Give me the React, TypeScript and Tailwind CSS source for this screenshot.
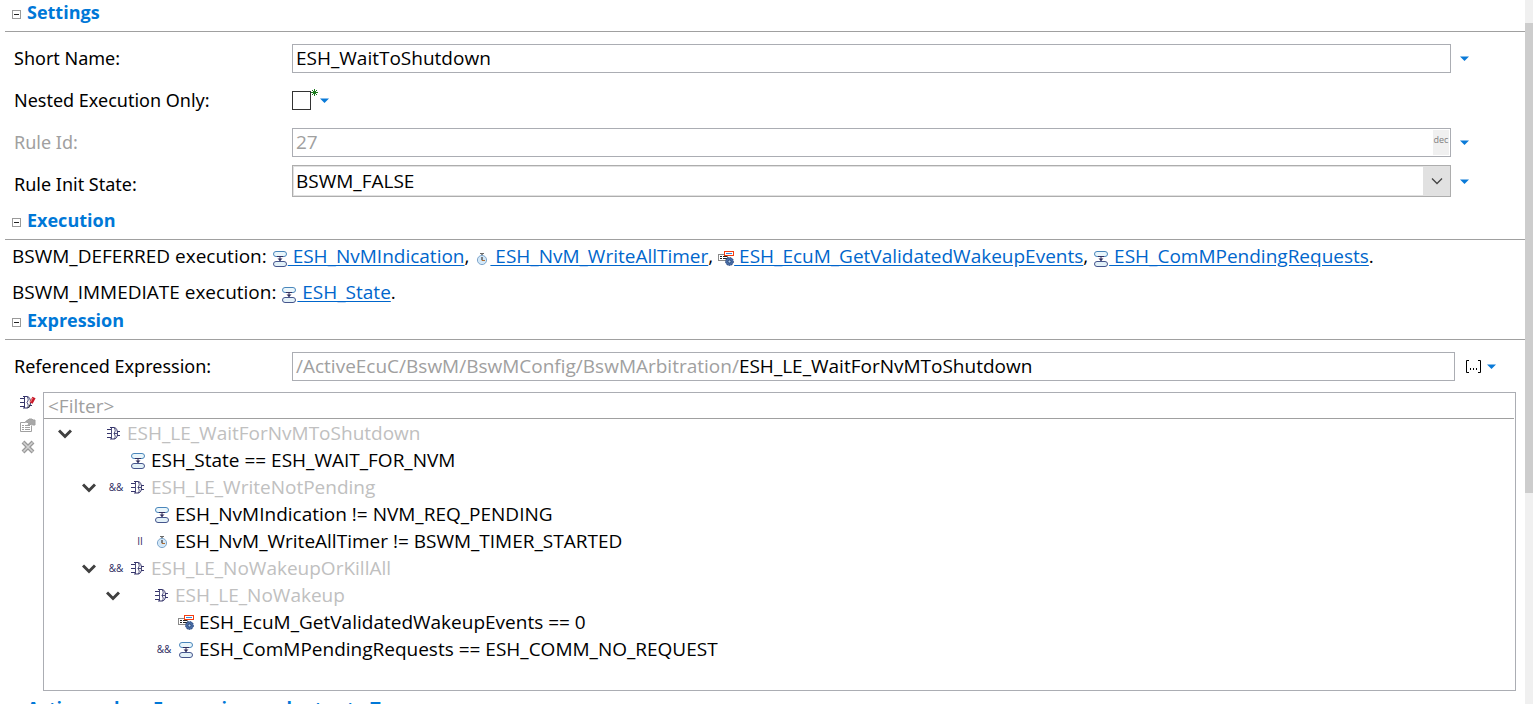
import { useState } from "react";
import type { ReactNode } from "react";

type IconKind = "signal" | "timer" | "callout" | "logic";

function SignalIcon() {
  return (
    <svg width="16" height="16" viewBox="0 0 16 16" fill="none" aria-hidden="true">
      <rect x="1.5" y="0.5" width="13" height="5" rx="2.5" fill="#eaf6fb" stroke="#4a86bb" />
      <rect x="1.5" y="10.5" width="13" height="5" rx="2.5" fill="#e3f1f8" stroke="#45558c" />
      <path d="M5 5.5h6M8 6v4" stroke="#33305f" />
      <path d="M5.5 7.5h5L8 10z" fill="#33305f" />
    </svg>
  );
}

function TimerIcon() {
  return (
    <svg width="16" height="16" viewBox="0 0 16 16" fill="none" aria-hidden="true">
      <path d="M6 2.5h4" stroke="#6b6b6b" />
      <path d="M8 3v2" stroke="#8a8a8a" strokeWidth="2" />
      <circle cx="8" cy="9" r="4.6" fill="#d3e8f8" stroke="#7fa6cc" />
      <path d="M8 6v3.5h3" stroke="#b06a2c" />
      <path d="M8 6v3" stroke="#35506f" />
    </svg>
  );
}

function CalloutIcon() {
  return (
    <svg width="16" height="16" viewBox="0 0 16 16" fill="none" aria-hidden="true">
      <rect x="0.5" y="3.5" width="9" height="6" fill="#fff" stroke="#8a8a8a" />
      <path d="M2 5.500h2M5 5.500h4M2 7.500h2M5 7.500h4" stroke="#222" />
      <rect x="6.5" y="0.500" width="9" height="4" fill="#fff" stroke="#f43c10" />
      <path d="M8 2.500h6" stroke="#3c86d8" />
      <circle cx="11.5" cy="10.500" r="3.9" fill="#4a6ea8" stroke="#2b4678" strokeDasharray="1.6 1" />
      <circle cx="11.5" cy="10.500" r="1.500" fill="#a9cbed" stroke="#223a68" strokeWidth="0.800" />
    </svg>
  );
}

function LogicIcon() {
  return (
    <svg width="16" height="16" viewBox="0 0 16 16" fill="none" stroke="#36356b" aria-hidden="true">
      <path d="M1 3.500h4M1 7.500h4M1 11.500h4M11 5.500h3M11 9.500h3" />
      <path d="M4 1.500h4.500c2 .500 3 3 3 6s-1 5-3 5.500H4" />
      <path d="M5.500 1.500v11.500M8 1.500c1.600 2 1.600 4 0 6c1.600 2 1.600 4 0 5.500M8 7.500h3.500" strokeWidth="0.900" />
    </svg>
  );
}

function Icon({ kind }: { kind: IconKind }) {
  if (kind === "signal") return <SignalIcon />;
  if (kind === "timer") return <TimerIcon />;
  if (kind === "callout") return <CalloutIcon />;
  return <LogicIcon />;
}

function MenuArrow({ label }: { label: string }) {
  return (
    <button type="button" aria-label={label} className="flex h-4 w-[9px] shrink-0 items-center">
      <svg width="9" height="5" viewBox="0 0 9 5" aria-hidden="true">
        <path d="M0 0.500h9L4.500 5z" fill="#0a7ad8" />
      </svg>
    </button>
  );
}

function SectionHeading({ children }: { children: ReactNode }) {
  return (
    <h2 className="ml-[5px] flex h-8 items-start border-b border-[#a0a0a0] pl-[7px] text-[18px] font-bold leading-6 text-[#0078d7]">
      <button type="button" className="flex items-center gap-[6px]">
        <svg width="9" height="9" viewBox="0 0 9 9" fill="none" className="mt-1" aria-hidden="true">
          <rect x="0.5" y="0.5" width="8" height="8" stroke="#9a9a9a" />
          <path d="M2 4.500h5" stroke="#222" />
        </svg>
        {children}
      </button>
    </h2>
  );
}

function FieldLabel({ htmlFor, className, children }: { htmlFor: string; className?: string; children: ReactNode }) {
  return (
    <label htmlFor={htmlFor} className={`w-[278px] shrink-0 font-['Noto_Sans',sans-serif] text-[18px] ${className ?? ""}`}>
      {children}
    </label>
  );
}

function Reference({ kind, name }: { kind: IconKind; name: string }) {
  return (
    <>
      <span className="inline-block h-4 align-[-4px]">
        <Icon kind={kind} />
      </span>
      <a href="#" className="whitespace-pre text-[#0066cc] underline underline-offset-2">
        {" " + name}
      </a>
    </>
  );
}

type TreeNode = { level: 0 | 1 | 2 | 3; kind: IconKind; text: string; op?: string };

const nodes: TreeNode[] = [
  { level: 0, kind: "logic", text: "ESH_LE_WaitForNvMToShutdown" },
  { level: 1, kind: "signal", text: "ESH_State == ESH_WAIT_FOR_NVM" },
  { level: 1, kind: "logic", text: "ESH_LE_WriteNotPending", op: "&&" },
  { level: 2, kind: "signal", text: "ESH_NvMIndication != NVM_REQ_PENDING" },
  { level: 2, kind: "timer", text: "ESH_NvM_WriteAllTimer != BSWM_TIMER_STARTED", op: "II" },
  { level: 1, kind: "logic", text: "ESH_LE_NoWakeupOrKillAll", op: "&&" },
  { level: 2, kind: "logic", text: "ESH_LE_NoWakeup" },
  { level: 3, kind: "callout", text: "ESH_EcuM_GetValidatedWakeupEvents == 0" },
  { level: 3, kind: "signal", text: "ESH_ComMPendingRequests == ESH_COMM_NO_REQUEST", op: "&&" },
];

const indents = ["pl-[14px]", "pl-[38px]", "pl-[62px]", "pl-[86px]"];

function TreeRow({ node }: { node: TreeNode }) {
  const group = node.kind === "logic";
  return (
    <li className={`flex h-[27px] items-center whitespace-nowrap ${indents[node.level]}`}>
      <span className="mr-3 flex w-[14px] shrink-0">
        {group && (
          <button type="button" aria-label={"Collapse " + node.text}>
            <svg width="14" height="10" viewBox="0 0 14 10" fill="none" aria-hidden="true">
              <path d="M1 1.500l6 6 6-6" stroke="#404040" strokeWidth="3" />
            </svg>
          </button>
        )}
      </span>
      <span className="mr-[6px] w-4 shrink-0 text-center text-[10px] text-[#2c2b60]">{node.op}</span>
      <span className="mr-[5px] shrink-0">
        <Icon kind={node.kind} />
      </span>
      <span className={group ? "text-[#c0c0c0]" : "text-black"}>{node.text}</span>
    </li>
  );
}

export default function App() {
  const [shortName, setShortName] = useState("ESH_WaitToShutdown");
  const [nested, setNested] = useState(false);
  const [expression, setExpression] = useState("ESH_LE_WaitForNvMToShutdown");
  const [filter, setFilter] = useState("");

  return (
    <div className="flex h-screen overflow-hidden bg-white font-['Open_Sans','Noto_Sans',sans-serif] text-[19px] text-black">
      <main className="min-w-0 flex-1">
        <SectionHeading>Settings</SectionHeading>
        <div className="flex flex-col pb-[11px] pl-[14px] pr-[56px] pt-3">
          <div className="flex h-[29px] items-center">
            <FieldLabel htmlFor="short-name">Short Name:</FieldLabel>
            <input
              id="short-name"
              value={shortName}
              onChange={(e) => setShortName(e.target.value)}
              className="mr-[9px] h-[29px] min-w-0 flex-1 border border-[#abadb3] px-[3px] pb-px outline-none"
            />
            <MenuArrow label="Short Name options" />
          </div>
          <div className="mt-[13px] flex h-[29px] items-center">
            <FieldLabel htmlFor="nested">Nested Execution Only:</FieldLabel>
            <input
              id="nested"
              type="checkbox"
              checked={nested}
              onChange={(e) => setNested(e.target.checked)}
              className="h-[19px] w-[19px] appearance-none border border-[#333] bg-white checked:bg-[#0078d7]"
            />
            <svg width="7" height="7" viewBox="0 0 7 7" fill="none" stroke="#1c7a1c" className="mb-4 mr-[2px]" aria-hidden="true">
              <path d="M3.500 0v7M0 3.500h7M1 1l5 5M6 1L1 6" />
            </svg>
            <MenuArrow label="Nested Execution options" />
          </div>
          <div className="mt-[13px] flex h-[29px] items-center">
            <FieldLabel htmlFor="rule-id" className="text-[#a0a0a0]">Rule Id:</FieldLabel>
            <div className="mr-[9px] flex h-[29px] min-w-0 flex-1 border border-[#abadb3] p-px">
              <input id="rule-id" readOnly value="27" className="min-w-0 flex-1 px-[2px] text-[#a0a0a0] outline-none" />
              <span className="w-4 bg-[#f0f0f0] text-center text-[9px] leading-5 text-[#808080]">dec</span>
            </div>
            <MenuArrow label="Rule Id options" />
          </div>
          <div className="mt-2 flex h-8 items-center">
            <FieldLabel htmlFor="init-state" className="pt-[6px]">Rule Init State:</FieldLabel>
            <div className="relative mr-[9px] flex h-8 min-w-0 flex-1 border border-[#adadad] bg-[#e1e1e1] p-px">
              <select
                id="init-state"
                defaultValue="BSWM_FALSE"
                className="w-full appearance-none bg-[linear-gradient(to_left,#e1e1e1_26px,#ffffff_26px)] px-[2px] outline-none"
              >
                <option>BSWM_FALSE</option>
                <option>BSWM_TRUE</option>
              </select>
              <svg width="12" height="7" viewBox="0 0 12 7" fill="none" className="pointer-events-none absolute right-[7px] top-3" aria-hidden="true">
                <path d="M1 0.500l5 5 5-5" stroke="#444" strokeWidth="1.300" />
              </svg>
            </div>
            <MenuArrow label="Rule Init State options" />
          </div>
        </div>

        <SectionHeading>Execution</SectionHeading>
        <div className="flex flex-col gap-1 pl-3">
          <p className="flex h-8 items-center">
            <span className="whitespace-nowrap">
              BSWM_DEFERRED execution: <Reference kind="signal" name="ESH_NvMIndication" />,{" "}
              <Reference kind="timer" name="ESH_NvM_WriteAllTimer" />,{" "}
              <Reference kind="callout" name="ESH_EcuM_GetValidatedWakeupEvents" />,{" "}
              <Reference kind="signal" name="ESH_ComMPendingRequests" />.
            </span>
          </p>
          <p className="flex h-8 items-center">
            <span className="whitespace-nowrap">
              BSWM_IMMEDIATE execution: <Reference kind="signal" name="ESH_State" />.
            </span>
          </p>
        </div>

        <SectionHeading>Expression</SectionHeading>
        <div className="flex h-[52px] items-center pl-[14px] pr-[29px]">
          <FieldLabel htmlFor="expression">Referenced Expression:</FieldLabel>
          <div className="mr-[11px] flex h-[29px] min-w-0 flex-1 items-center border border-[#abadb3] px-[3px]">
            <span className="text-[#a0a0a0]">/ActiveEcuC/BswM/BswMConfig/BswMArbitration/</span>
            <input
              id="expression"
              value={expression}
              onChange={(e) => setExpression(e.target.value)}
              className="min-w-0 flex-1 outline-none"
            />
          </div>
          <button type="button" aria-label="Browse" className="mr-[6px]">
            <svg width="15" height="13" viewBox="0 0 15 13" fill="none" stroke="#000" aria-hidden="true">
              <path d="M3 0.500H0.500v12H3M12 0.500h2.500v12H12" />
              <path d="M4 9h1M7 9h1M10 9h1" strokeWidth="2" />
            </svg>
          </button>
          <MenuArrow label="Expression options" />
        </div>

        <div className="flex pl-5 pr-[9px]">
          <div className="flex w-[23px] shrink-0 flex-col gap-[6px] pt-[3px]">
            <button type="button" aria-label="Edit expression">
              <svg width="16" height="16" viewBox="0 0 16 16" fill="none" stroke="#36356b" aria-hidden="true">
                <path d="M0 3.500h4M0 7.500h4M0 11.500h4M10 10.500h2" />
                <path d="M3 1.500h4.500c2 .500 3 3 3 6s-1 5-3 5.500H3M4.500 1.500v11.500" />
                <path d="M7 1.500c1.600 2 1.600 4 0 6c1.600 2 1.600 4 0 5.500" strokeWidth="0.900" />
                <path d="M14 2.500l-3 5.500" stroke="#c81828" strokeWidth="3.600" />
                <path d="M12.500 3l-2 4" stroke="#f58a8a" />
                <path d="M10 9.500l-1.500 3.500" stroke="#333" />
              </svg>
            </button>
            <button type="button" aria-label="Properties">
              <svg width="16" height="16" viewBox="0 0 16 16" fill="none" stroke="#a0a0a0" aria-hidden="true">
                <path d="M0.500 5.500h5v-1l3-2M0.500 5.500v9h11v-6" />
                <path d="M2 8.500h2M5 8.500h5M2 10.500h2M5 10.500h5M2 12.500h2M5 12.500h5" />
                <path d="M6 5l3-3h3l1 1h2v5h-2l-2-1-2 2-1-1 1-2z" fill="#a8a8a8" />
              </svg>
            </button>
            <button type="button" aria-label="Delete">
              <svg width="16" height="16" viewBox="0 0 16 16" fill="none" aria-hidden="true">
                <path d="M3 3l10 10M13 3L3 13" stroke="#999" strokeWidth="4" />
                <path d="M3.500 3.500l9 9M12.500 3.500l-9 9" stroke="#d4d4d4" strokeWidth="1.500" />
              </svg>
            </button>
          </div>
          <div className="min-w-0 flex-1 border border-[#abadb3] pb-[27px]">
            <div className="mr-px border-b border-[#a0a0a0]">
              <input
                aria-label="Filter"
                placeholder="<Filter>"
                value={filter}
                onChange={(e) => setFilter(e.target.value)}
                className="block h-[25px] w-full px-1 pt-px outline-none placeholder:text-[#a0a0a0]"
              />
            </div>
            <ul className="pt-px">
              {nodes.map((node) => (
                <TreeRow key={node.text} node={node} />
              ))}
            </ul>
          </div>
        </div>

        <div className="pt-[5px]">
          <SectionHeading>Actions when Expression evaluates to True</SectionHeading>
        </div>
      </main>
      <div className="w-2 shrink-0 bg-[#f0f0f0] pt-[23px]">
        <div className="h-[69%] bg-[#cdcdcd]" />
      </div>
    </div>
  );
}
